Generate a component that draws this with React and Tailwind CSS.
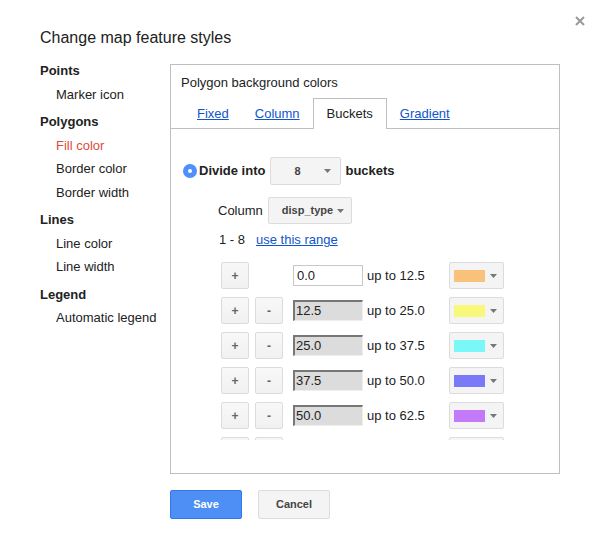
import React from "react";

const rows = [
  { from: "0.0", to: "12.5", color: "#f8c27a", first: true },
  { from: "12.5", to: "25.0", color: "#f8f87a" },
  { from: "25.0", to: "37.5", color: "#7af8f8" },
  { from: "37.5", to: "50.0", color: "#7a7af8" },
  { from: "50.0", to: "62.5", color: "#c27af8" },
];

function Arrow() {
  return (
    <svg width="7" height="4" viewBox="0 0 7 4" className="shrink-0">
      <path d="M0 0 H7 L3.5 4 Z" fill="#777" />
    </svg>
  );
}

function SmallBtn({ children }) {
  return (
    <div className="w-[28px] h-[27px] shrink-0 flex items-center justify-center rounded-[2px] border border-[#dcdcdc] bg-gradient-to-b from-[#f8f8f8] to-[#f1f1f1] text-[12px] font-bold text-[#666]">
      {children}
    </div>
  );
}

function NavHead({ children, first }) {
  return (
    <div className={`font-bold text-[13px] leading-[23.5px] text-[#222] ${first ? "" : "mt-[4px]"}`}>
      {children}
    </div>
  );
}

function NavItem({ children, active }) {
  return (
    <div className={`pl-4 text-[13px] leading-[23.5px] ${active ? "text-[#dd4b39]" : "text-[#222]"}`}>
      {children}
    </div>
  );
}

export default function App() {
  return (
    <div className="relative w-[600px] h-[548px] bg-white pl-[40px] pt-[28px] font-['Liberation_Sans',Arial,sans-serif] text-[#222]">
      <svg className="absolute left-[575px] top-[16px]" width="10" height="10" viewBox="0 0 10 10">
        <path d="M1 1 L9 9 M9 1 L1 9" stroke="#999" strokeWidth="2" />
      </svg>
      <div className="text-[16px] leading-[20px] text-[#222]">Change map feature styles</div>
      <div className="flex mt-[11px]">
        <div className="w-[130px] shrink-0">
          <NavHead first>Points</NavHead>
          <NavItem>Marker icon</NavItem>
          <NavHead>Polygons</NavHead>
          <NavItem active>Fill color</NavItem>
          <NavItem>Border color</NavItem>
          <NavItem>Border width</NavItem>
          <NavHead>Lines</NavHead>
          <NavItem>Line color</NavItem>
          <NavItem>Line width</NavItem>
          <NavHead>Legend</NavHead>
          <NavItem>Automatic legend</NavItem>
        </div>
        <div className="mt-[5px] flex flex-col">
          <div className="w-[390px] h-[410px] border border-[#bfbfbf] flex flex-col">
            <div className="pl-[10px] pt-[10px] text-[13px] leading-[16px] text-[#222]">
              Polygon background colors
            </div>
            <div className="mt-[7px] flex pl-[13px] border-b border-[#bfbfbf] h-[31px]">
              <div className="px-[13px] h-[30px] pt-[1px] flex items-center text-[13px] text-[#1155cc] underline">Fixed</div>
              <div className="px-[13px] h-[30px] pt-[1px] flex items-center text-[13px] text-[#1155cc] underline">Column</div>
              <div className="px-[13px] h-[31px] flex items-center text-[13px] text-[#222] bg-white border border-b-0 border-[#bfbfbf] -mb-px">Buckets</div>
              <div className="px-[13px] h-[30px] pt-[1px] flex items-center text-[13px] text-[#1155cc] underline">Gradient</div>
            </div>
            <div className="h-[311px] overflow-hidden pl-[12px] pt-[28px]">
              <div className="flex items-center h-[28px]">
                <div className="w-[14px] h-[14px] rounded-full bg-[#4d90fe] flex items-center justify-center shrink-0">
                  <div className="w-[4px] h-[4px] rounded-full bg-white" />
                </div>
                <span className="ml-[2px] text-[13px] font-bold text-[#222]">Divide into</span>
                <div className="ml-[5px] w-[71px] h-[28px] rounded-[2px] border border-[#dcdcdc] bg-[#f4f4f4] flex items-center pl-[23px] pr-[9px] justify-between">
                  <span className="text-[11px] font-bold text-[#444]">8</span>
                  <Arrow />
                </div>
                <span className="ml-[4px] text-[13px] font-bold text-[#222]">buckets</span>
              </div>
              <div className="flex items-center h-[27px] mt-[12px] pl-[35px]">
                <span className="text-[13px] text-[#222]">Column</span>
                <div className="ml-[5px] w-[84px] h-[27px] rounded-[2px] border border-[#dcdcdc] bg-[#f4f4f4] flex items-center justify-between pl-[13px] pr-[7px]">
                  <span className="text-[11px] font-bold text-[#444]">disp_type</span>
                  <Arrow />
                </div>
              </div>
              <div className="flex items-center h-[16px] mt-[8px] pl-[36px] text-[13px]">
                <span className="text-[#222]">1 - 8</span>
                <span className="ml-[11px] text-[#1155cc] underline">use this range</span>
              </div>
              <div className="mt-[14px] pl-[38px] flex flex-col gap-[8px]">
                {rows.map((r, i) => (
                  <div key={i} className="flex items-center h-[27px]">
                    <SmallBtn>+</SmallBtn>
                    {r.first ? (
                      <div className="w-[28px] ml-[6px] shrink-0" />
                    ) : (
                      <div className="ml-[6px]">
                        <SmallBtn>-</SmallBtn>
                      </div>
                    )}
                    {r.first ? (
                      <div className="ml-[10px] w-[70px] h-[21px] border border-[#c8c8c8] bg-white flex items-center pl-[3px] text-[13px] text-[#222] shrink-0">
                        {r.from}
                      </div>
                    ) : (
                      <div className="ml-[10px] w-[70px] h-[21px] border-t-2 border-l-2 border-t-[#777] border-l-[#777] border-b border-r border-b-[#eee] border-r-[#eee] bg-[#dcdcdc] flex items-center pl-[1px] text-[13px] text-[#222] shrink-0">
                        {r.from}
                      </div>
                    )}
                    <div className="ml-[4px] w-[82px] text-[13px] text-[#222] shrink-0">up to {r.to}</div>
                    <div className="w-[55px] h-[27px] rounded-[2px] border border-[#dcdcdc] bg-[#f4f4f4] flex items-center pl-[4px] pr-[6px] justify-between shrink-0">
                      <div className="w-[31px] h-[12px]" style={{ backgroundColor: r.color }} />
                      <Arrow />
                    </div>
                  </div>
                ))}
                <div className="flex h-[27px]">
                  <div className="w-[28px] h-[27px] rounded-[2px] border border-[#dcdcdc] bg-[#f6f6f6]" />
                  <div className="ml-[6px] w-[28px] h-[27px] rounded-[2px] border border-[#dcdcdc] bg-[#f6f6f6]" />
                  <div className="ml-[166px] w-[55px] h-[27px] rounded-[2px] border border-[#dcdcdc] bg-[#f6f6f6]" />
                </div>
              </div>
            </div>
          </div>
          <div className="flex mt-[16px] gap-[16px]">
            <div className="w-[72px] h-[29px] rounded-[2px] border border-[#3079ed] bg-[#4d8ff5] flex items-center justify-center text-[11px] font-bold text-white">
              Save
            </div>
            <div className="w-[72px] h-[29px] rounded-[2px] border border-[#dcdcdc] bg-[#f4f4f4] flex items-center justify-center text-[11px] font-bold text-[#444]">
              Cancel
            </div>
          </div>
        </div>
      </div>
    </div>
  );
}
